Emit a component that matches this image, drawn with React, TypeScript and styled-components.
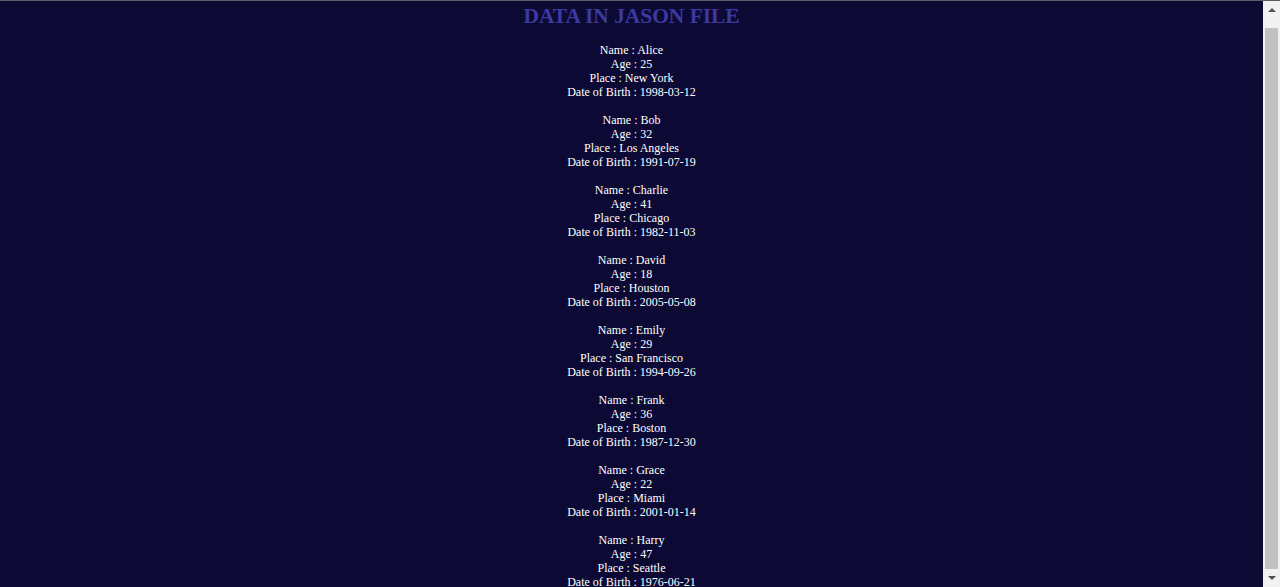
import React from 'react';
import styled, { createGlobalStyle } from 'styled-components';

const GlobalStyle = createGlobalStyle`
  html, body {
    margin: 0;
    padding: 0;
    height: 100%;
    overflow: hidden;
  }
  body {
    font-family: 'Liberation Serif', 'Times New Roman', serif;
  }
`;

const Frame = styled.div`
  display: flex;
  height: 100vh;
  box-sizing: border-box;
  border-top: 1px solid #5c5c66;
  background: #0c0a34;
`;

const Main = styled.main`
  flex: 1;
  overflow: hidden;
  padding-top: 3px;
  text-align: center;
  color: #ffffff;
`;

const Title = styled.h1`
  margin: 0 0 15px;
  font-size: 21.4px;
  line-height: 24px;
  font-weight: bold;
  color: #3d39a2;
`;

const List = styled.div`
  display: flex;
  flex-direction: column;
  gap: 14px;
`;

const Person = styled.div`
  font-size: 12px;
  line-height: 14px;
`;

const Scrollbar = styled.div`
  width: 17px;
  display: flex;
  flex-direction: column;
  background: #f1f1f1;
`;

const Arrow = styled.div`
  height: 17px;
  display: flex;
  align-items: center;
  justify-content: center;
`;

const Track = styled.div`
  flex: 1;
  display: flex;
  flex-direction: column;
  padding: 10px 2px 1px;
`;

const Thumb = styled.div`
  flex: 1;
  background: #c1c1c1;
`;

interface IPerson {
  name: string;
  age: number;
  place: string;
  dob: string;
}

const people: IPerson[] = [
  { name: 'Alice', age: 25, place: 'New York', dob: '1998-03-12' },
  { name: 'Bob', age: 32, place: 'Los Angeles', dob: '1991-07-19' },
  { name: 'Charlie', age: 41, place: 'Chicago', dob: '1982-11-03' },
  { name: 'David', age: 18, place: 'Houston', dob: '2005-05-08' },
  { name: 'Emily', age: 29, place: 'San Francisco', dob: '1994-09-26' },
  { name: 'Frank', age: 36, place: 'Boston', dob: '1987-12-30' },
  { name: 'Grace', age: 22, place: 'Miami', dob: '2001-01-14' },
  { name: 'Harry', age: 47, place: 'Seattle', dob: '1976-06-21' },
];

function App() {
  return (
    <>
      <GlobalStyle />
      <Frame>
        <Main>
          <Title>DATA IN JASON FILE</Title>
          <List>
            {people.map((p) => (
              <Person key={p.name}>
                <div>Name : {p.name}</div>
                <div>Age : {p.age}</div>
                <div>Place : {p.place}</div>
                <div>Date of Birth : {p.dob}</div>
              </Person>
            ))}
          </List>
        </Main>
        <Scrollbar>
          <Arrow>
            <svg width="8" height="5" viewBox="0 0 8 5">
              <path d="M0 5 L4 1 L8 5 Z" fill="#505050" />
            </svg>
          </Arrow>
          <Track>
            <Thumb />
          </Track>
          <Arrow>
            <svg width="8" height="5" viewBox="0 0 8 5">
              <path d="M0 0 L4 4 L8 0 Z" fill="#505050" />
            </svg>
          </Arrow>
        </Scrollbar>
      </Frame>
    </>
  );
}

export default App;
